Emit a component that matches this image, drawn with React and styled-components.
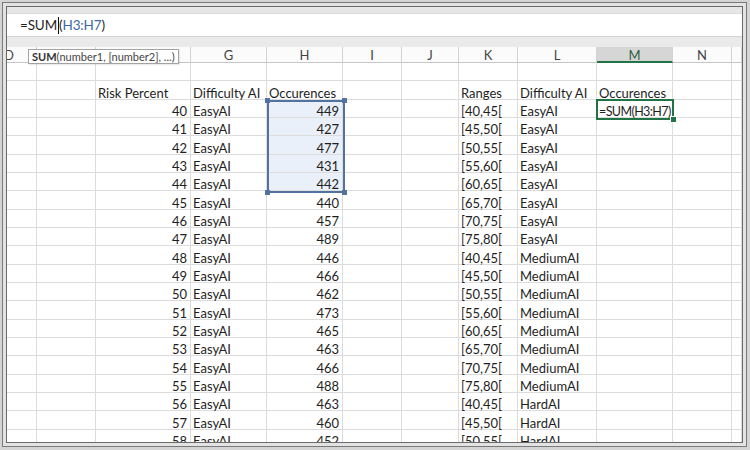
import React from "react";
import styled, { createGlobalStyle } from "styled-components";

const Global = createGlobalStyle`
  html, body { margin: 0; padding: 0; background: #d6d6d6; }
  body { font-family: Lato, "Open Sans", sans-serif; }
`;

const COLS = "30px 59px 95px 76px 76px 59px 57px 59px 79px 76px 59px 1fr";
const LETTERS = ["D", "E", "F", "G", "H", "I", "J", "K", "L", "M", "N", "O"];

const Frame = styled.div`
  width: 750px;
  height: 450px;
  box-sizing: border-box;
  padding: 2px 3px 3px 2px;
  background: #d4d4d4;
`;

const OuterBorder = styled.div`
  height: 100%;
  box-sizing: border-box;
  border: 1px solid #7a7a7a;
  background: #e3e3e3;
  padding: 3px;
`;

const Window = styled.div`
  position: relative;
  height: 100%;
  box-sizing: border-box;
  border: 1px solid #6a6a6a;
  background: #ffffff;
  overflow: hidden;
  display: flex;
  flex-direction: column;
`;

const Band = styled.div`
  flex: 0 0 ${(p) => p.$h}px;
  background: ${(p) => p.$bg};
`;

const FormulaBar = styled.div`
  flex: 0 0 24px;
  box-sizing: border-box;
  background: #fff;
  border-top: 1px solid #dcdcdc;
  border-bottom: 1px solid #d4d4d4;
  display: flex;
  align-items: center;
  padding-left: 13px;
  font-size: 13.5px;
  color: #1f1f1f;
  letter-spacing: -0.15px;
`;

const RefText = styled.span`
  color: ${(p) => (p.$blue ? "#3b69a3" : "inherit")};
`;

const Caret = styled.span`
  display: inline-block;
  width: 1px;
  height: 17px;
  background: #111;
  vertical-align: middle;
  margin: 0 0.5px;
`;

const GridRow = styled.div`
  display: grid;
  grid-template-columns: ${COLS};
  flex: 0 0 ${(p) => p.$h}px;
  height: ${(p) => p.$h}px;
`;

const HeadCell = styled.div`
  box-sizing: border-box;
  border-right: 1px solid #d2d2d2;
  border-bottom: ${(p) => (p.$active ? "2px solid #217346" : "1px solid #c6c6c6")};
  background: ${(p) => (p.$active ? "#d6d6d6" : "#fbfbfb")};
  color: ${(p) => (p.$active ? "#2e5b41" : "#444")};
  font-size: 13px;
  display: flex;
  align-items: center;
  justify-content: ${(p) => (p.$clip ? "flex-start" : "center")};
  overflow: hidden;
  padding-top: 1px;
`;

const ClipLetter = styled.span`
  margin-left: -3px;
`;

const Cell = styled.div`
  box-sizing: border-box;
  border-right: 1px solid #dcdcdc;
  border-bottom: 1px solid #dcdcdc;
  background: ${(p) => (p.$sel ? "#e9f0f9" : "#fff")};
  font-size: 13px;
  color: #1e1e1e;
  display: flex;
  align-items: flex-end;
  justify-content: ${(p) => (p.$right ? "flex-end" : "flex-start")};
  padding: 0 3px 0 2px;
  line-height: 11px;
  white-space: nowrap;
  overflow: visible;
  min-width: 0;
`;

const Tooltip = styled.div`
  position: absolute;
  left: 21px;
  top: 42px;
  height: 15px;
  box-sizing: border-box;
  padding: 0 3px 0 3px;
  border: 1px solid #a3a3a3;
  background: #fff;
  box-shadow: 1px 1px 1px rgba(0, 0, 0, 0.08);
  font-size: 11px;
  line-height: 13px;
  color: #444;
  white-space: nowrap;
`;

const Bold = styled.b`
  color: #333;
`;

const Selection = styled.div`
  position: absolute;
  left: 260px;
  top: 93px;
  width: 78px;
  height: 93px;
  box-sizing: border-box;
  border: 2px solid #52739f;
  pointer-events: none;
`;

const Handle = styled.div`
  position: absolute;
  width: 5px;
  height: 5px;
  background: ${(p) => p.$c};
  ${(p) => (p.$top ? "top: -4px;" : "bottom: -4px;")}
  ${(p) => (p.$left ? "left: -4px;" : "right: -4px;")}
  ${(p) => (p.$outline ? "outline: 1px solid #fff;" : "")}
`;

const ActiveCell = styled.div`
  position: absolute;
  left: 589px;
  top: 92px;
  width: 78px;
  height: 21px;
  box-sizing: border-box;
  border: 2px solid #217346;
  pointer-events: none;
`;

const ActiveText = styled.div`
  font-size: 12.5px;
  letter-spacing: -0.6px;
  color: #1e1e1e;
  line-height: 16px;
  padding: 3px 0 0 1px;
  white-space: nowrap;
`;

const ranges = ["[40,45[", "[45,50[", "[50,55[", "[55,60[", "[60,65[", "[65,70[", "[70,75[", "[75,80["];
const occ = [449, 427, 477, 431, 442, 440, 457, 489, 446, 466, 462, 473, 465, 463, 466, 488, 463, 460, 452];

const rows = [];
rows.push({});
rows.push({ F: "Risk Percent", G: "Difficulty AI", H: "Occurences", K: "Ranges", L: "Difficulty AI", M: "Occurences", head: true });
for (let i = 0; i < 19; i++) {
  const lvl = i < 8 ? "EasyAI" : i < 16 ? "MediumAI" : "HardAI";
  rows.push({
    F: String(40 + i),
    G: "EasyAI",
    H: String(occ[i]),
    K: ranges[i % 8],
    L: lvl,
    M: i === 0 ? "=SUM(H3:H7)" : "",
    sel: i < 5,
  });
}

const ROW_H = 55 / 3;

export default function App() {
  return (
    <>
      <Global />
      <Frame>
        <OuterBorder>
          <Window>
            <Band $h={6} $bg="#e6e6e6" />
            <FormulaBar>
              <span>=SUM</span>
              <Caret />
              <span>(</span>
              <RefText $blue>H3:H7</RefText>
              <span>)</span>
            </FormulaBar>
            <Band $h={10} $bg="#eaeaea" />
            <GridRow $h={16}>
              {LETTERS.map((l, i) => (
                <HeadCell key={l} $active={l === "M"} $clip={i === 0}>
                  {i === 0 ? <ClipLetter>{l}</ClipLetter> : l === "O" ? "" : l}
                </HeadCell>
              ))}
            </GridRow>
            {rows.map((r, ri) => (
              <GridRow key={ri} $h={ROW_H}>
                {LETTERS.map((l) => {
                  const v = r[l] || "";
                  const right = !r.head && (l === "F" || l === "H");
                  return (
                    <Cell key={l} $right={right} $sel={r.sel && l === "H"}>
                      {l === "M" && !r.head ? "" : v}
                    </Cell>
                  );
                })}
              </GridRow>
            ))}
            <Tooltip>
              <Bold>SUM</Bold>(number1, [number2], ...)
            </Tooltip>
            <Selection>
              <Handle $c="#52739f" $top $left />
              <Handle $c="#52739f" $top />
              <Handle $c="#52739f" $left />
              <Handle $c="#52739f" />
            </Selection>
            <ActiveCell>
              <ActiveText>=SUM(H3:H7)</ActiveText>
              <Handle $c="#217346" $outline />
            </ActiveCell>
          </Window>
        </OuterBorder>
      </Frame>
    </>
  );
}
